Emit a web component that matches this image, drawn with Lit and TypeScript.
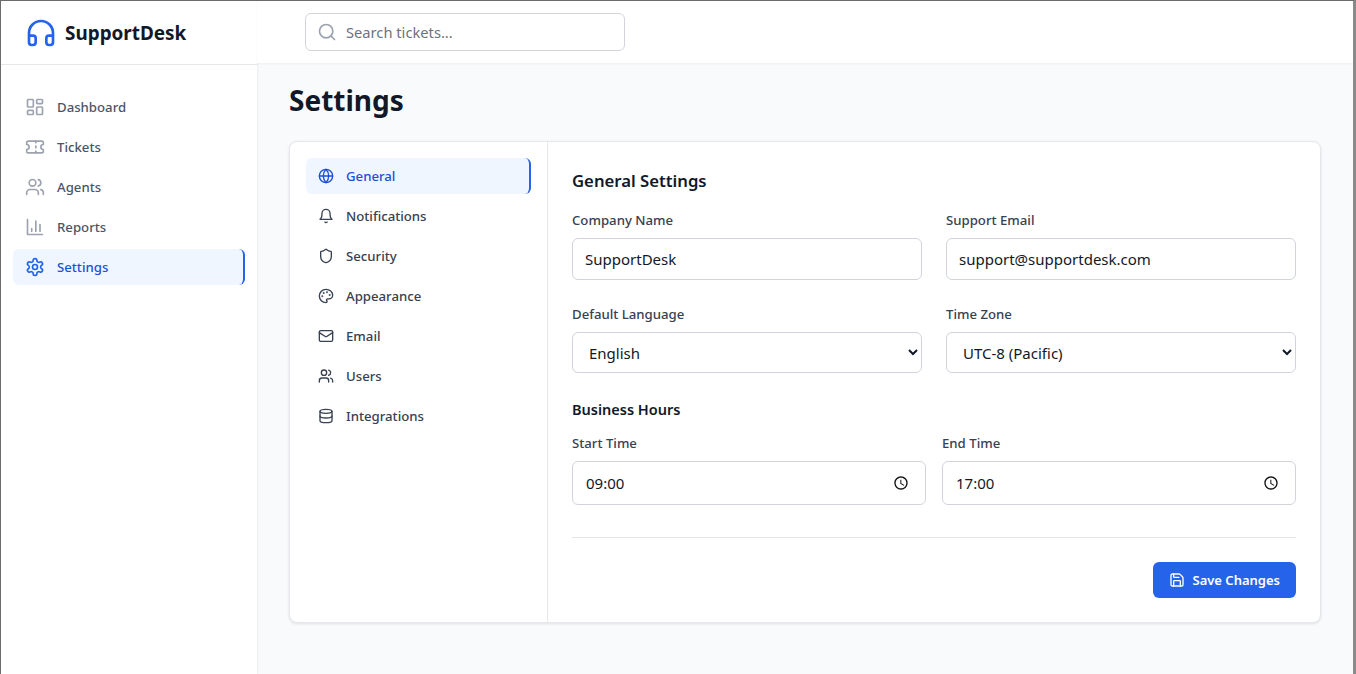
import { LitElement, css, html, svg } from 'lit'
import { customElement } from 'lit/decorators.js'

const icon = (body: unknown, size = 20, sw = 2) => html`<svg width=${size} height=${size} viewBox="0 0 24 24" fill="none" stroke="currentColor" stroke-width=${sw} stroke-linecap="round" stroke-linejoin="round">${body}</svg>`

const ICONS: Record<string, unknown> = {
  headphones: svg`<path d="M3 14h3a2 2 0 0 1 2 2v3a2 2 0 0 1-2 2H5a2 2 0 0 1-2-2v-7a9 9 0 0 1 18 0v7a2 2 0 0 1-2 2h-1a2 2 0 0 1-2-2v-3a2 2 0 0 1 2-2h3"/>`,
  search: svg`<circle cx="11" cy="11" r="8"/><path d="m21 21-4.3-4.3"/>`,
  dashboard: svg`<rect width="7" height="9" x="3" y="3" rx="1"/><rect width="7" height="5" x="14" y="3" rx="1"/><rect width="7" height="9" x="14" y="12" rx="1"/><rect width="7" height="5" x="3" y="16" rx="1"/>`,
  ticket: svg`<path d="M2 9a3 3 0 0 1 0 6v2a2 2 0 0 0 2 2h16a2 2 0 0 0 2-2v-2a3 3 0 0 1 0-6V7a2 2 0 0 0-2-2H4a2 2 0 0 0-2 2Z"/><path d="M13 5v2"/><path d="M13 17v2"/><path d="M13 11v2"/>`,
  users: svg`<path d="M16 21v-2a4 4 0 0 0-4-4H6a4 4 0 0 0-4 4v2"/><circle cx="9" cy="7" r="4"/><path d="M22 21v-2a4 4 0 0 0-3-3.87"/><path d="M16 3.13a4 4 0 0 1 0 7.75"/>`,
  chart: svg`<path d="M3 3v18h18"/><path d="M18 17V9"/><path d="M13 17V5"/><path d="M8 17v-3"/>`,
  settings: svg`<path d="M12.22 2h-.44a2 2 0 0 0-2 2v.18a2 2 0 0 1-1 1.73l-.43.25a2 2 0 0 1-2 0l-.15-.08a2 2 0 0 0-2.73.73l-.22.38a2 2 0 0 0 .73 2.73l.15.1a2 2 0 0 1 1 1.72v.51a2 2 0 0 1-1 1.74l-.15.09a2 2 0 0 0-.73 2.73l.22.38a2 2 0 0 0 2.73.73l.15-.08a2 2 0 0 1 2 0l.43.25a2 2 0 0 1 1 1.73V20a2 2 0 0 0 2 2h.44a2 2 0 0 0 2-2v-.18a2 2 0 0 1 1-1.73l.43-.25a2 2 0 0 1 2 0l.15.08a2 2 0 0 0 2.73-.73l.22-.39a2 2 0 0 0-.73-2.73l-.15-.08a2 2 0 0 1-1-1.74v-.5a2 2 0 0 1 1-1.74l.15-.09a2 2 0 0 0 .73-2.73l-.22-.38a2 2 0 0 0-2.73-.73l-.15.08a2 2 0 0 1-2 0l-.43-.25a2 2 0 0 1-1-1.73V4a2 2 0 0 0-2-2z"/><circle cx="12" cy="12" r="3"/>`,
  globe: svg`<circle cx="12" cy="12" r="10"/><path d="M12 2a14.5 14.5 0 0 0 0 20 14.5 14.5 0 0 0 0-20"/><path d="M2 12h20"/>`,
  bell: svg`<path d="M6 8a6 6 0 0 1 12 0c0 7 3 9 3 9H3s3-2 3-9"/><path d="M10.3 21a1.94 1.94 0 0 0 3.4 0"/>`,
  shield: svg`<path d="M20 13c0 5-3.5 7.5-7.66 8.95a1 1 0 0 1-.67-.01C7.5 20.5 4 18 4 13V6a1 1 0 0 1 1-1c2 0 4.5-1.2 6.24-2.72a1.17 1.17 0 0 1 1.52 0C14.51 3.81 17 5 19 5a1 1 0 0 1 1 1z"/>`,
  palette: svg`<circle cx="13.5" cy="6.5" r=".5" fill="currentColor"/><circle cx="17.5" cy="10.5" r=".5" fill="currentColor"/><circle cx="8.5" cy="7.5" r=".5" fill="currentColor"/><circle cx="6.5" cy="12.5" r=".5" fill="currentColor"/><path d="M12 2C6.5 2 2 6.5 2 12s4.5 10 10 10c.926 0 1.648-.746 1.648-1.688 0-.437-.18-.835-.437-1.125-.29-.289-.438-.652-.438-1.125a1.64 1.64 0 0 1 1.668-1.668h1.996c3.051 0 5.555-2.503 5.555-5.554C21.965 6.012 17.461 2 12 2z"/>`,
  mail: svg`<rect width="20" height="16" x="2" y="4" rx="2"/><path d="m22 7-8.97 5.7a1.94 1.94 0 0 1-2.06 0L2 7"/>`,
  database: svg`<ellipse cx="12" cy="5" rx="9" ry="3"/><path d="M3 5v14a9 3 0 0 0 18 0V5"/><path d="M3 12a9 3 0 0 0 18 0"/>`,
  save: svg`<path d="M15.2 3a2 2 0 0 1 1.4.6l3.8 3.8a2 2 0 0 1 .6 1.4V19a2 2 0 0 1-2 2H5a2 2 0 0 1-2-2V5a2 2 0 0 1 2-2z"/><path d="M17 21v-7a1 1 0 0 0-1-1H8a1 1 0 0 0-1 1v7"/><path d="M7 3v4a1 1 0 0 0 1 1h7"/>`,
}

const clock = html`<svg class="clock" width="16" height="16" viewBox="0 0 24 24" fill="#111"><path d="M11.99 2C6.47 2 2 6.48 2 12s4.47 10 9.99 10C17.52 22 22 17.52 22 12S17.52 2 11.99 2zM12 20c-4.42 0-8-3.58-8-8s3.58-8 8-8 8 3.58 8 8-3.58 8-8 8zm.5-13H11v6l5.25 3.15.75-1.23-4.5-2.67z"/></svg>`

const MAIN_NAV = [
  ['dashboard', 'Dashboard'],
  ['ticket', 'Tickets'],
  ['users', 'Agents'],
  ['chart', 'Reports'],
  ['settings', 'Settings'],
]

const SETTINGS_NAV = [
  ['globe', 'General'],
  ['bell', 'Notifications'],
  ['shield', 'Security'],
  ['palette', 'Appearance'],
  ['mail', 'Email'],
  ['users', 'Users'],
  ['database', 'Integrations'],
]

@customElement('app-root')
export class AppRoot extends LitElement {
  render() {
    return html`
      <div class="frame">
        <aside class="sidebar">
          <div class="brand">
            <span class="brand-icon">${icon(ICONS.headphones, 32, 2)}</span>
            <span class="brand-name">SupportDesk</span>
          </div>
          <nav class="main-nav">
            ${MAIN_NAV.map(([ic, label]) => html`
              <a class="main-item ${label === 'Settings' ? 'active' : ''}">
                <span class="ic">${icon(ICONS[ic])}</span>${label}
              </a>`)}
          </nav>
        </aside>
        <div class="page">
          <header class="topbar">
            <div class="search">
              <span class="search-icon">${icon(ICONS.search)}</span>
              <input type="text" placeholder="Search tickets..." />
            </div>
          </header>
          <main class="content">
            <h1>Settings</h1>
            <section class="card">
              <nav class="side">
                ${SETTINGS_NAV.map(([ic, label]) => html`
                  <a class="side-item ${label === 'General' ? 'active' : ''}">
                    <span class="ic">${icon(ICONS[ic], 16)}</span>${label}
                  </a>`)}
              </nav>
              <form class="form">
                <h2>General Settings</h2>
                <div class="grid">
                  <label>Company Name<input type="text" value="SupportDesk" /></label>
                  <label>Support Email<input type="email" value="support@supportdesk.com" /></label>
                  <label>Default Language<select><option>English</option></select></label>
                  <label>Time Zone<select><option>UTC-8 (Pacific)</option></select></label>
                </div>
                <h3>Business Hours</h3>
                <div class="grid times">
                  <label>Start Time<span class="time-field"><input class="time" type="text" value="09:00" />${clock}</span></label>
                  <label>End Time<span class="time-field"><input class="time" type="text" value="17:00" />${clock}</span></label>
                </div>
                <div class="actions">
                  <button type="button" class="save">${icon(ICONS.save, 16)}Save Changes</button>
                </div>
              </form>
            </section>
          </main>
        </div>
      </div>
    `
  }

  static styles = css`
    :host {
      display: block;
      font-family: 'Noto Sans', Inter, sans-serif;
      color: #111827;
    }
    * { box-sizing: border-box; }
    .frame {
      display: flex;
      height: 674px;
      border: 1px solid #6b6b6b;
      border-right: 3px solid #8a8a8a;
      border-bottom: 0;
      background: #f9fafb;
      overflow: hidden;
    }
    .sidebar {
      flex: 0 0 256px;
      background: #fff;
      box-shadow: 0 1px 3px rgba(0, 0, 0, 0.1);
    }
    .brand {
      display: flex;
      align-items: center;
      gap: 8px;
      height: 64px;
      padding: 0 24px;
      border-bottom: 1px solid #e5e7eb;
    }
    .brand-icon { display: flex; color: #2563eb; }
    .brand-name { font-size: 18.9px; font-weight: 700; color: #111827; }
    .main-nav {
      display: flex;
      flex-direction: column;
      gap: 4px;
      padding: 24px 12px;
    }
    .main-item, .side-item {
      display: flex;
      align-items: center;
      height: 36px;
      border-radius: 6px;
      font-size: 13.2px;
      font-weight: 500;
    }
    .main-item { gap: 12px; padding: 0 12px; color: #4b5563; }
    .main-item .ic { display: flex; color: #9ca3af; }
    .ic { display: flex; }
    .side-item { gap: 12px; padding: 0 12px; color: #374151; }
    .active {
      background: #eff6ff;
      color: #1d4ed8;
      border-right: 2px solid #2563eb;
    }
    .main-item.active .ic { color: #2563eb; }
    .page {
      flex: 1;
      display: flex;
      flex-direction: column;
      min-width: 0;
    }
    .topbar {
      display: flex;
      align-items: center;
      height: 62px;
      padding: 0 48px;
      background: #fff;
      box-shadow: 0 1px 2px rgba(0, 0, 0, 0.05);
    }
    .search { position: relative; width: 320px; }
    .search-icon {
      position: absolute;
      left: 12px;
      top: 9px;
      display: flex;
      color: #9ca3af;
    }
    .search input {
      width: 100%;
      height: 38px;
      padding: 0 12px 0 40px;
      border: 1px solid #d1d5db;
      border-radius: 6px;
      font: 14.7px 'Noto Sans', sans-serif;
    }
    .search input::placeholder { color: #6b7280; }
    .content { padding: 16px 32px 0 32px; }
    h1 {
      margin: 0 0 20px;
      font-size: 28px;
      line-height: 42px;
      font-weight: 700;
      color: #111827;
    }
    .card {
      display: flex;
      width: 1032px;
      background: #fff;
      border: 1px solid #e5e7eb;
      border-radius: 8px;
      box-shadow: 0 1px 3px rgba(0, 0, 0, 0.1);
    }
    .side {
      flex: 0 0 258px;
      display: flex;
      flex-direction: column;
      gap: 4px;
      padding: 16px;
      border-right: 1px solid #e5e7eb;
    }
    .form { flex: 1; padding: 24px; min-width: 0; }
    h2 {
      margin: 0 0 14px;
      font-size: 16.7px;
      line-height: 30px;
      font-weight: 600;
      color: #111827;
    }
    h3 {
      margin: 26px 0 14px;
      font-size: 14.5px;
      line-height: 20px;
      font-weight: 600;
      color: #111827;
    }
    .grid {
      display: grid;
      grid-template-columns: 1fr 1fr;
      gap: 24px;
    }
    .grid.times { gap: 16px; }
    label {
      display: flex;
      flex-direction: column;
      gap: 8px;
      font-size: 13.2px;
      line-height: 20px;
      font-weight: 500;
      color: #374151;
    }
    .grid input, .grid select {
      width: 100%;
      height: 42px;
      padding: 0 12px;
      border: 1px solid #d1d5db;
      border-radius: 6px;
      background: #fff;
      color: #111827;
      font: 15px 'Noto Sans', sans-serif;
    }
    .grid select { height: 41px; }
    .time-field { position: relative; display: block; height: 44px; }
    .grid input.time { height: 44px; padding-left: 13px; }
    .clock { position: absolute; right: 17px; top: 14px; }
    .actions {
      display: flex;
      justify-content: flex-end;
      margin-top: 32px;
      padding-top: 24px;
      border-top: 1px solid #e5e7eb;
    }
    .save {
      display: flex;
      align-items: center;
      gap: 8px;
      height: 36px;
      padding: 0 16px;
      border: 0;
      border-radius: 6px;
      background: #2563eb;
      color: #fff;
      font: 600 13px 'Noto Sans', sans-serif;
    }
  `
}

declare global {
  interface HTMLElementTagNameMap {
    'app-root': AppRoot
  }
}
